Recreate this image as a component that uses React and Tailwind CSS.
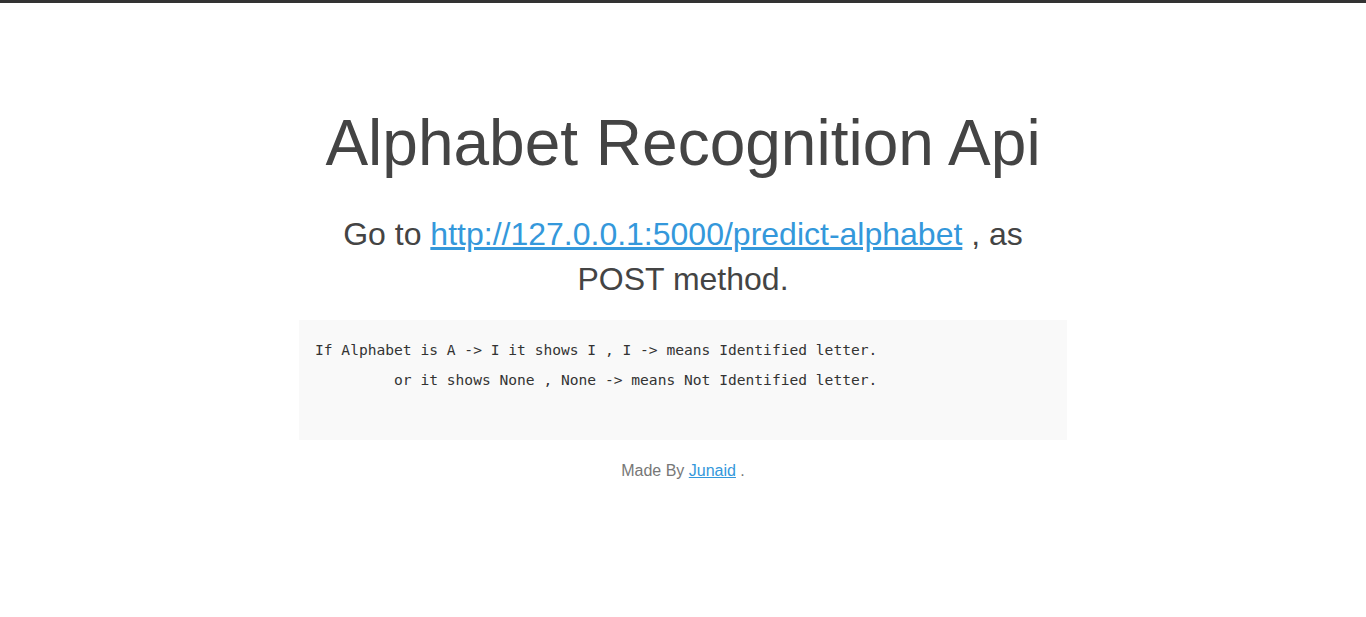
export default function App() {
  return (
    <div className="min-h-screen bg-white border-t-[3px] border-[#333] font-['Liberation_Sans',Arial,sans-serif] text-[#444]">
      <div className="w-[768px] mx-auto text-center pt-[105px]">
        <h1 className="text-[64px] leading-[1.1] font-normal">Alphabet Recognition Api</h1>
        <h2 className="mt-[34px] text-[32px] leading-[45px] font-normal">
          Go to <a href="#" className="text-[#3498db] underline">http://127.0.0.1:5000/predict-alphabet</a> , as POST method.
        </h2>
        <pre className="mt-[18px] bg-[#f9f9f9] p-[15px] pl-[16px] text-left font-['DejaVu_Sans_Mono',monospace] text-[14.6px] leading-[30px] text-[#333]">
{`If Alphabet is A -> I it shows I , I -> means Identified letter.
         or it shows None , None -> means Not Identified letter.
 `}
        </pre>
        <p className="mt-[19px] text-[16px] leading-[24px] text-[#777]">
          Made By <a href="#" className="text-[#3498db] underline">Junaid</a> .
        </p>
      </div>
    </div>
  );
}
